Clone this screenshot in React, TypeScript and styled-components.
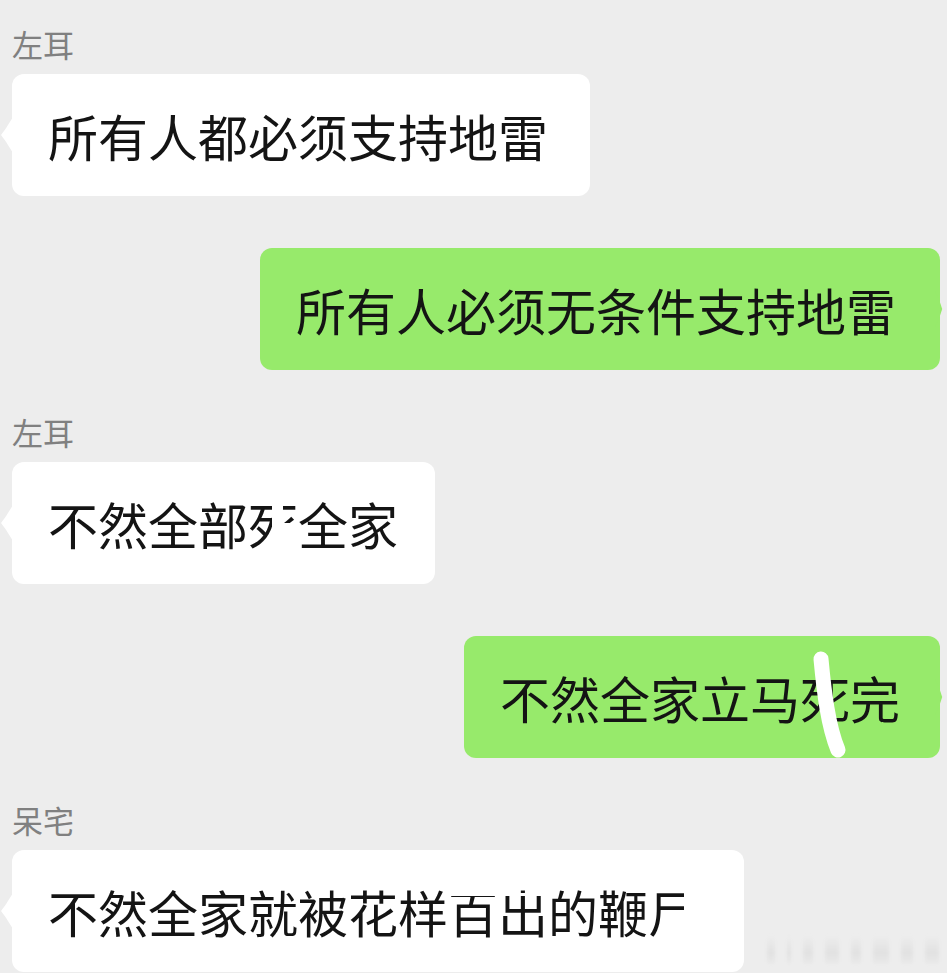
import React from 'react'
import styled, { createGlobalStyle, css } from 'styled-components'

const GlobalStyle = createGlobalStyle`
  html, body {
    margin: 0;
    padding: 0;
    background: #ededed;
  }
  body {
    font-family: "Noto Sans CJK SC", "Noto Sans", sans-serif;
    color: #191919;
  }
`

const Page = styled.div`
  width: 947px;
  height: 973px;
  overflow: hidden;
  box-sizing: border-box;
  padding-top: 26px;
  display: flex;
  flex-direction: column;
`

const Group = styled.div<{ $top?: number }>`
  display: flex;
  flex-direction: column;
  margin-top: ${p => p.$top || 0}px;
`

const Name = styled.div`
  height: 36px;
  padding-left: 12px;
  font-size: 31px;
  line-height: 36px;
  color: #808080;
  margin-bottom: 12px;
`

const Row = styled.div<{ $mine?: boolean }>`
  display: flex;
  align-items: flex-end;
  justify-content: ${p => (p.$mine ? 'flex-end' : 'flex-start')};
  padding: ${p => (p.$mine ? '0 7px 0 0' : '0 0 0 12px')};
`

const Bubble = styled.div<{ $mine?: boolean; $pl?: number; $pr?: number }>`
  position: relative;
  height: 122px;
  box-sizing: border-box;
  padding: 30px ${p => p.$pr ?? 40}px 30px ${p => p.$pl ?? 36}px;
  border-radius: 12px;
  font-size: 50px;
  line-height: 62px;
  white-space: nowrap;
  color: #141414;
  background: ${p => (p.$mine ? '#97ea6b' : '#ffffff')};

  &::before {
    content: '';
    position: absolute;
    top: 50%;
    width: 12px;
    height: 36px;
    margin-top: -18px;
    background: inherit;
    ${p =>
      p.$mine
        ? css`
            right: -7px;
            clip-path: polygon(0 0, 40% 30%, 60% 50%, 40% 70%, 0 100%);
          `
        : css`
            left: -11px;
            clip-path: polygon(100% 0, 40% 32%, 0 50%, 40% 68%, 100% 100%);
          `}
  }
`

const Cut = styled.span`
  position: relative;
  display: inline-block;
`

const Cover = styled.span<{ $l: number; $t: number; $w: number; $h: number }>`
  position: absolute;
  left: ${p => p.$l}px;
  top: ${p => p.$t}px;
  width: ${p => p.$w}px;
  height: ${p => p.$h}px;
  background: #ffffff;
`

const Stroke = styled.svg`
  position: absolute;
  left: 340px;
  top: 10px;
  overflow: visible;
  pointer-events: none;
`

const Mark = styled.div`
  margin-left: auto;
  margin-right: 8px;
  margin-bottom: 8px;
  display: flex;
  gap: 12px;
  align-items: flex-end;
  opacity: 0.45;
`

const MarkBar = styled.span<{ $w: number }>`
  display: block;
  width: ${p => p.$w}px;
  height: 28px;
  background: linear-gradient(180deg, #ededed 0%, #d4d4d4 60%, #e6e6e6 100%);
  filter: blur(1.5px);
`

export default function App() {
  return (
    <>
      <GlobalStyle />
      <Page>
        <Group>
          <Name>左耳</Name>
          <Row>
            <Bubble $pr={42}>所有人都必须支持地雷</Bubble>
          </Row>
        </Group>

        <Group $top={52}>
          <Row $mine>
            <Bubble $mine $pr={44}>所有人必须无条件支持地雷</Bubble>
          </Row>
        </Group>

        <Group $top={44}>
          <Name>左耳</Name>
          <Row>
            <Bubble $pr={37}>
              不然全部
              <Cut>
                死
                <Cover $l={24} $t={4} $w={11} $h={56} />
                <Cover $l={30} $t={31} $w={22} $h={26} />
              </Cut>
              全家
            </Bubble>
          </Row>
        </Group>

        <Group $top={52}>
          <Row $mine>
            <Bubble $mine $pr={40}>
              不然全家立马死完
              <Stroke width="48" height="110" viewBox="0 0 48 110">
                <path
                  d="M17 13 C20 45, 24 80, 34 104"
                  fill="none"
                  stroke="#ffffff"
                  strokeWidth="15"
                  strokeLinecap="round"
                />
              </Stroke>
            </Bubble>
          </Row>
        </Group>

        <Group $top={44}>
          <Name>呆宅</Name>
          <Row>
            <Bubble $pr={46}>
              不然全家就被花样
              <Cut>
                百出的鞭尸
                <Cover $l={0} $t={13} $w={100} $h={3} />
                <Cover $l={236} $t={6} $w={14} $h={50} />
              </Cut>
            </Bubble>
            <Mark>
              <MarkBar $w={8} />
              <MarkBar $w={4} />
              <MarkBar $w={10} />
              <MarkBar $w={14} />
              <MarkBar $w={10} />
              <MarkBar $w={16} />
              <MarkBar $w={12} />
              <MarkBar $w={14} />
            </Mark>
          </Row>
        </Group>
      </Page>
    </>
  )
}
